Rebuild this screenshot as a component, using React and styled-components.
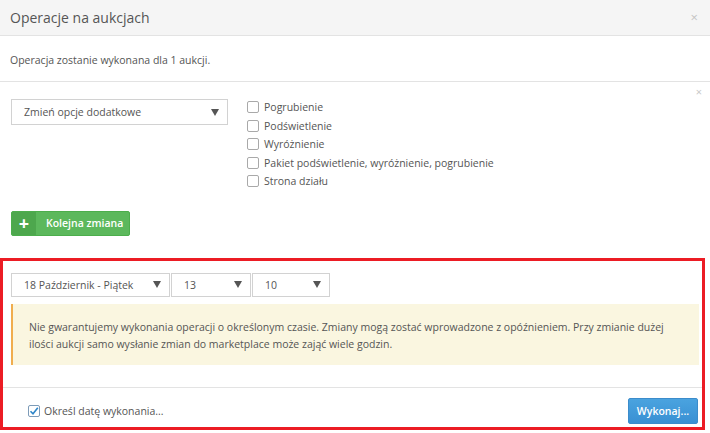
import React from 'react'
import styled, { createGlobalStyle } from 'styled-components'

const Global = createGlobalStyle`
  body {
    margin: 0;
    background: #fff;
    font-family: "Open Sans", "Liberation Sans", sans-serif;
    color: #555;
  }
`

const Modal = styled.div`
  width: 710px;
  background: #fff;
`

const Header = styled.div`
  height: 35px;
  display: flex;
  align-items: center;
  justify-content: space-between;
  padding: 0 12px 0 10px;
  background: #f5f5f5;
  border-bottom: 1px solid #e3e3e3;
`

const Title = styled.h4`
  margin: 0;
  font-size: 14px;
  font-weight: 400;
  color: #555;
`

const Close = styled.span`
  font-size: 13px;
  color: #c4c4c4;
  line-height: 1;
`

const Info = styled.div`
  padding: 16px 10px 13px;
  font-size: 10.5px;
  line-height: 16px;
  border-bottom: 1px solid #e3e3e3;
`

const ChangeBlock = styled.div`
  position: relative;
  padding: 17px 11px 22px;
`

const RemoveX = styled.span`
  position: absolute;
  top: 2px;
  right: 8px;
  font-size: 11px;
  color: #c8c8c8;
`

const ChangeRow = styled.div`
  display: flex;
  align-items: flex-start;
  gap: 19px;
`

const Select = styled.div`
  box-sizing: border-box;
  display: flex;
  align-items: center;
  justify-content: space-between;
  width: ${p => p.$w}px;
  height: ${p => p.$h || 24}px;
  padding: 0 8px 0 12px;
  border: 1px solid #d2d2d2;
  background: #fff;
  font-size: 10.5px;
  color: #555;
`

const Arrow = styled.span`
  width: 0;
  height: 0;
  border-left: 4px solid transparent;
  border-right: 4px solid transparent;
  border-top: 7px solid #555;
`

const CheckList = styled.div`
  display: flex;
  flex-direction: column;
  margin-top: -1px;
`

const CheckRow = styled.label`
  display: flex;
  align-items: center;
  gap: 5px;
  height: 18.5px;
  font-size: 10.5px;
  color: #555;
`

const Box = styled.span`
  box-sizing: border-box;
  width: 12px;
  height: 12px;
  border: 1px solid #a9a9a9;
  border-radius: 2px;
  background: #fff;
  display: flex;
  align-items: center;
  justify-content: center;
  border-color: ${p => (p.$checked ? '#7d9bb8' : '#a9a9a9')};
`

const AddButton = styled.button`
  display: flex;
  align-items: stretch;
  margin-top: 20px;
  padding: 0;
  height: 25px;
  width: 119px;
  border: 1px solid #4cae4c;
  border-radius: 2px;
  background: #5cb85c;
  color: #fff;
  font-family: inherit;
  font-size: 10.5px;
  font-weight: 600;
  overflow: hidden;
`

const PlusPart = styled.span`
  width: 24px;
  display: flex;
  align-items: center;
  justify-content: center;
  background: #4da74d;
  font-size: 18px;
  font-weight: 700;
  line-height: 1;
`

const AddLabel = styled.span`
  display: flex;
  align-items: center;
  padding-left: 10px;
`

const Highlight = styled.div`
  width: 705px;
  box-sizing: border-box;
  border: 3px solid #ec1c24;
`

const DateRow = styled.div`
  display: flex;
  gap: 1px;
  padding: 12px 0 0 8px;
`

const Alert = styled.div`
  margin: 7px 3px 0 8px;
  padding: 15px 15px 12px 16px;
  background: #faf6e0;
  border-left: 2px solid #f0ad4e;
  font-size: 10.5px;
  line-height: 17px;
  color: #555;
`

const Footer = styled.div`
  margin-top: 22px;
  border-top: 1px solid #e3e3e3;
  display: flex;
  align-items: center;
  justify-content: space-between;
  padding: 10px 4px 3px 25px;
`

const FooterCheck = styled.label`
  display: flex;
  align-items: center;
  gap: 4px;
  font-size: 10.5px;
  color: #555;
`

const RunButton = styled.button`
  height: 26px;
  width: 70px;
  padding: 0;
  border: 1px solid #3b8ccb;
  border-radius: 2px;
  background: linear-gradient(#4aa3df, #3990d3);
  color: #fff;
  font-family: inherit;
  font-size: 10.5px;
  font-weight: 600;
`

const options = [
  'Pogrubienie',
  'Podświetlenie',
  'Wyróżnienie',
  'Pakiet podświetlenie, wyróżnienie, pogrubienie',
  'Strona działu',
]

function Check() {
  return (
    <svg width="10" height="10" viewBox="0 0 10 10">
      <path d="M1.5 5.2 L4 7.8 L8.8 1.8" fill="none" stroke="#2f86c9" strokeWidth="1.6" />
    </svg>
  )
}

export default function App() {
  return (
    <Modal>
      <Global />
      <Header>
        <Title>Operacje na aukcjach</Title>
        <Close>×</Close>
      </Header>
      <Info>Operacja zostanie wykonana dla 1 aukcji.</Info>
      <ChangeBlock>
        <RemoveX>×</RemoveX>
        <ChangeRow>
          <Select $w={217} $h={26}>
            Zmień opcje dodatkowe
            <Arrow />
          </Select>
          <CheckList>
            {options.map(o => (
              <CheckRow key={o}>
                <Box />
                {o}
              </CheckRow>
            ))}
          </CheckList>
        </ChangeRow>
        <AddButton>
          <PlusPart>+</PlusPart>
          <AddLabel>Kolejna zmiana</AddLabel>
        </AddButton>
      </ChangeBlock>
      <Highlight>
        <DateRow>
          <Select $w={159}>
            18 Październik - Piątek
            <Arrow />
          </Select>
          <Select $w={80}>
            13
            <Arrow />
          </Select>
          <Select $w={78}>
            10
            <Arrow />
          </Select>
        </DateRow>
        <Alert>
          Nie gwarantujemy wykonania operacji o określonym czasie. Zmiany mogą zostać wprowadzone z opóźnieniem. Przy zmianie dużej ilości aukcji samo wysłanie zmian do marketplace może zająć wiele godzin.
        </Alert>
        <Footer>
          <FooterCheck>
            <Box $checked>
              <Check />
            </Box>
            Określ datę wykonania...
          </FooterCheck>
          <RunButton>Wykonaj...</RunButton>
        </Footer>
      </Highlight>
    </Modal>
  )
}
